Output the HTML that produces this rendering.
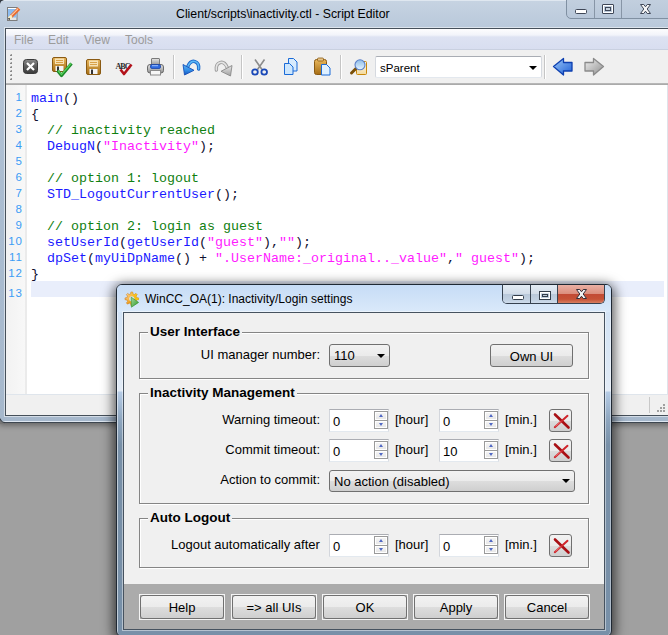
<!DOCTYPE html>
<html><head><meta charset="utf-8">
<style>
*{box-sizing:border-box;margin:0;padding:0}
html,body{width:668px;height:635px;overflow:hidden;background:#a0a0a0;font-family:"Liberation Sans",sans-serif;position:relative}
div,span,svg{position:absolute}
.t{white-space:pre}
/* editor window */
#ed{left:0;top:0;width:700px;height:423px;background:linear-gradient(#c6d3e2,#b8c8da 28px,#abbdd1 180px,#a6b8cc 100%);border-top:1px solid #dfe7f0;border-bottom:1px solid #3d4650;box-shadow:0 1px 6px 1px rgba(0,0,0,.4),inset 0 -1px 0 #dde6f0}
#edtitle{left:176px;top:7px;font-size:12.3px;color:#000}
#edcap{left:566px;top:-1px;width:110px;height:20px;border:1px solid #8090a2;border-radius:0 0 5px 5px;background:linear-gradient(#c2cfde,#b8c7d9)}
#dcap{left:502px;top:284px;width:103px;height:20px;border:1px solid #36414f;border-top:1px solid #1f2833;border-radius:0 0 5px 5px;overflow:hidden}
#dcap div{top:0;height:19px;background:linear-gradient(#e3ebf4 0,#d3dde9 45%,#b9c8da 50%,#c2d1e2 80%,#d4e1ef 100%)}
#dcap .cl{background:linear-gradient(#eab0a4 0,#dc8f7e 45%,#c24a34 50%,#c65236 75%,#dc8a6c 100%)}
#client{left:5px;top:28px;width:700px;height:388px;border:1px solid #46505a;background:#f0f0f0;box-shadow:0 0 0 1px rgba(255,255,255,.5)}
#menu{left:6px;top:29px;width:680px;height:21px;background:linear-gradient(#fdfdfe 0,#f2f4fa 6px,#dde2f2 8px,#d8def0 100%);border-bottom:1px solid #c9d0e0}
.mi{top:33px;font-size:12px;color:#9c9c9c}
#tb{left:6px;top:50px;width:680px;height:33px;background:#f0f0f0}
#tbline{left:6px;top:83px;width:680px;height:2px;background:linear-gradient(#bdbdbd,#a4a4a4)}
#edit{left:6px;top:85px;width:680px;height:309px;background:#fff}
#gutter{left:6px;top:85px;width:21px;height:309px;background:linear-gradient(90deg,#f2f2f2,#f8f8f8);border-right:2px solid #ebebeb}
#curline{left:31px;top:281px;width:633px;height:16px;background:#e9eefb}
.ln{left:5px;font-size:11.5px;letter-spacing:1px;color:#3b9cf5;width:18px;text-align:right}
.code{left:31px;font-family:"Liberation Mono",monospace;font-size:13.333px;color:#101030}
.code span{position:static}.k{color:#1a1aff}.c{color:#108010}.s{color:#ff1aff}
#status{left:6px;top:394px;width:680px;height:21px;background:#f0f0f0;border-top:1px solid #dfe5ec}
/* dialog */
#dshadow{left:116px;top:284px;width:496px;height:353px;border-radius:7px;box-shadow:0 3px 12px 3px rgba(0,0,0,.62)}
#dlg{left:116px;top:284px;width:496px;height:353px;border-radius:6px;border:1px solid #1f2833;background:linear-gradient(#cfe1f6 0,#d8e6f5 60px,#e2ebf6 106px,#b6cce6 107px,#8ea6bf 135px,#7890a8 160px,#7890a8 100%);box-shadow:inset 1px 1px 0 rgba(255,255,255,.55),inset -1px 0 0 rgba(255,255,255,.4)}
#dlgtop{left:117px;top:285px;width:494px;height:27px;border-radius:5px 5px 0 0;background:linear-gradient(#c6dcf6,#d2e4f8 60%,#dae9fa)}
#dtitle{left:145px;top:292px;font-size:12px;color:#000}
#dcl{left:123px;top:312px;width:482px;height:318px;border:1px solid #46525f;background:#f0f0f0;box-shadow:0 0 0 1px rgba(255,255,255,.45)}
#dbot{left:124px;top:584px;width:480px;height:45px;background:#ababab}
.lbl{font-size:13px;line-height:15px;color:#000}
.gb{border:1px solid #858585;box-shadow:inset 1px 1px 0 #fff, 1px 1px 0 #fff}
.gt{font-size:13.5px;line-height:15px;font-weight:bold;background:#f0f0f0;padding:0 2px;color:#000}
.spin{width:60px;height:23px;background:#fff;border:1px solid #dadde3;border-top-color:#abadb3;border-left-color:#d3d6dc;border-bottom-color:#e3e9ef}
.spin .v{left:3px;top:4px;font-size:13px;line-height:15px}
.sb{left:44px;top:1px;width:14px;height:18px;border:1px solid #9a9a9a;background:#9a9a9a}
.sb .up,.sb .dn{left:0;width:12px;height:8px;border:1px solid #fff;background:linear-gradient(#f4f4f4,#e8e8e8)}
.sb .up{top:0}.sb .dn{top:9px;height:7px}
i{position:absolute;width:0;height:0;border-left:3px solid transparent;border-right:3px solid transparent}
.ua{left:3px;top:1px;border-left-width:2.5px;border-right-width:2.5px;border-bottom:3px solid #5068c4}.da{left:3px;top:1px;border-left-width:2.5px;border-right-width:2.5px;border-top:3px solid #5068c4}
.xbtn{width:23px;height:23px;border:1px solid #707070;border-radius:3px;background:linear-gradient(#f2f2f2 0,#ebebeb 50%,#dddddd 51%,#cfcfcf 100%)}
.btn{height:24px;border:1px solid #707070;border-radius:3px;background:linear-gradient(#f2f2f2 0,#ebebeb 50%,#dddddd 51%,#cfcfcf 100%);box-shadow:inset 0 0 0 1px rgba(255,255,255,.8);font-size:13px;text-align:center;line-height:23px;color:#000}
.combo{border:1px solid #707070;border-radius:3px;background:linear-gradient(#f2f2f2 0,#ebebeb 50%,#dddddd 51%,#cfcfcf 100%);font-size:13px}
.arrow{width:0;height:0;border-left:4px solid transparent;border-right:4px solid transparent;border-top:4px solid #000}
</style></head><body>

<div id="ed"></div><svg style="left:0;top:0" width="8" height="8" viewBox="0 0 8 8"><path d="M0 0 H3 Q0 0.5 0 3 Z" fill="#a0a0a0"/><path d="M-0.5 3.5 Q-0.2 0.2 3.5 -0.5" fill="none" stroke="#2e343c" stroke-width="1.6"/></svg>
<div id="edtitle" class="t">Client/scripts\inactivity.ctl - Script Editor</div>
<div id="edcap"></div>
<svg style="left:566px;top:0" width="102" height="20" viewBox="0 0 102 20">
<rect x="28" y="0" width="1" height="18" fill="#8795a6"/><rect x="55" y="0" width="1" height="18" fill="#8795a6"/>
<rect x="9.5" y="9.5" width="11" height="4" rx="1" fill="#fff" stroke="#3f4757"/>
<rect x="36.5" y="4.5" width="11" height="9" rx="0.5" fill="none" stroke="#3f4757"/><rect x="37.5" y="5.5" width="9" height="7" fill="none" stroke="#fff"/><rect x="39.5" y="7.5" width="5" height="3" fill="#c8d3df" stroke="#3f4757"/>
<path d="M74.5 4.5 H77.8 L79.5 6.8 L81.2 4.5 H84.5 L81.2 9 L84.5 13.5 H81.2 L79.5 11.2 L77.8 13.5 H74.5 L77.8 9 Z" fill="#f6f6f6" stroke="#3f4757" stroke-width="1" stroke-linejoin="round"/>
</svg>
<div id="client"></div>
<div id="menu"></div>
<span class="mi t" style="left:14px">File</span><span class="mi t" style="left:48px">Edit</span><span class="mi t" style="left:84px">View</span><span class="mi t" style="left:125px">Tools</span>
<div id="tb"></div>
<div id="tbline"></div>
<div id="edit"></div>
<div id="gutter"></div>
<div id="curline"></div><div style="left:667px;top:85px;width:1px;height:309px;background:#dfe3ea"></div>
<div id="status"></div>
<svg style="left:0;top:414px" width="8" height="10" viewBox="0 414 8 10"><path d="M0 419 Q1.5 422.6 5 423 V424 H0 Z" fill="#767676"/><path d="M0 418.6 Q1.5 422.4 5 422.6" fill="none" stroke="#3a4048" stroke-width="1.2"/></svg>
<div style="left:649px;top:397px;width:1px;height:16px;background:#c8c8c8"></div>
<svg style="left:655px;top:403px" width="13" height="12" viewBox="0 0 13 12"><g fill="#a0a0a0"><rect x="8" y="1" width="2" height="2"/><rect x="5" y="4" width="2" height="2"/><rect x="8" y="4" width="2" height="2"/><rect x="2" y="7" width="2" height="2"/><rect x="5" y="7" width="2" height="2"/><rect x="8" y="7" width="2" height="2"/></g></svg>

<svg style="left:0;top:0" width="668" height="300" viewBox="0 0 668 300">
<defs>
<linearGradient id="gClose" x1="0" y1="0" x2="0" y2="1"><stop offset="0" stop-color="#8a8a8a"/><stop offset="0.5" stop-color="#5c5c5c"/><stop offset="1" stop-color="#3a3a3a"/></linearGradient>
<linearGradient id="gFlop" x1="0" y1="0" x2="0" y2="1"><stop offset="0" stop-color="#e9b75c"/><stop offset="1" stop-color="#a66d14"/></linearGradient>
<linearGradient id="gBlue" x1="0" y1="0" x2="1" y2="1"><stop offset="0" stop-color="#9cc8f7"/><stop offset="1" stop-color="#1e5fd6"/></linearGradient>
<linearGradient id="gGray" x1="0" y1="0" x2="1" y2="1"><stop offset="0" stop-color="#f0f0f0"/><stop offset="1" stop-color="#8e8e8e"/></linearGradient>
<linearGradient id="gPrint" x1="0" y1="0" x2="0" y2="1"><stop offset="0" stop-color="#e6e6e6"/><stop offset="1" stop-color="#8f8f8f"/></linearGradient>
<linearGradient id="gPaper" x1="0" y1="0" x2="0" y2="1"><stop offset="0" stop-color="#fffaf0"/><stop offset="1" stop-color="#f3d99c"/></linearGradient>
<linearGradient id="gLens" x1="0" y1="0" x2="0" y2="1"><stop offset="0" stop-color="#8fbde8"/><stop offset="1" stop-color="#e4f4ff"/></linearGradient>
<linearGradient id="gUndo" x1="0" y1="0" x2="0" y2="1"><stop offset="0" stop-color="#5ab4f4"/><stop offset="0.6" stop-color="#2f8ae6"/><stop offset="1" stop-color="#1450b8"/></linearGradient><linearGradient id="gRedo" x1="0" y1="0" x2="0" y2="1"><stop offset="0" stop-color="#e8e8e8"/><stop offset="1" stop-color="#a0a0a0"/></linearGradient></defs>
<!-- grip -->
<rect x="11" y="54" width="1" height="1" fill="#9a9a9a"/><rect x="10" y="55" width="2" height="1" fill="#8a8a8a"/><rect x="10" y="54" width="1" height="1" fill="#d0d0d0"/><rect x="11" y="58" width="1" height="1" fill="#9a9a9a"/><rect x="10" y="59" width="2" height="1" fill="#8a8a8a"/><rect x="10" y="58" width="1" height="1" fill="#d0d0d0"/><rect x="11" y="62" width="1" height="1" fill="#9a9a9a"/><rect x="10" y="63" width="2" height="1" fill="#8a8a8a"/><rect x="10" y="62" width="1" height="1" fill="#d0d0d0"/><rect x="11" y="66" width="1" height="1" fill="#9a9a9a"/><rect x="10" y="67" width="2" height="1" fill="#8a8a8a"/><rect x="10" y="66" width="1" height="1" fill="#d0d0d0"/><rect x="11" y="70" width="1" height="1" fill="#9a9a9a"/><rect x="10" y="71" width="2" height="1" fill="#8a8a8a"/><rect x="10" y="70" width="1" height="1" fill="#d0d0d0"/><rect x="11" y="74" width="1" height="1" fill="#9a9a9a"/><rect x="10" y="75" width="2" height="1" fill="#8a8a8a"/><rect x="10" y="74" width="1" height="1" fill="#d0d0d0"/><rect x="11" y="78" width="1" height="1" fill="#9a9a9a"/><rect x="10" y="79" width="2" height="1" fill="#8a8a8a"/><rect x="10" y="78" width="1" height="1" fill="#d0d0d0"/>
<!-- close doc -->
<rect x="23.5" y="59.5" width="14" height="14" rx="3" fill="url(#gClose)" stroke="#3a3a3a"/>
<path d="M27 63 L34 70 M34 63 L27 70" stroke="#fff" stroke-width="2.2"/>
<!-- save + check -->
<rect x="52.5" y="57.5" width="14" height="14" rx="1.5" fill="url(#gFlop)" stroke="#8a5a12"/>
<rect x="55" y="58.5" width="9" height="5.5" fill="#f7e2b5"/>
<path d="M56 60.5h7M56 62.5h7" stroke="#d59a3a" stroke-width="0.9"/>
<rect x="55.5" y="66" width="8" height="5" fill="#f4f4f4"/><rect x="57" y="66.5" width="2" height="4.5" fill="#333"/>
<path d="M57.5 70.5 L61.5 75.5 L71.5 63.5" fill="none" stroke="#1d8a2a" stroke-width="3.2" stroke-linejoin="round"/>
<path d="M58 70.5 L61.5 74.5 L71 63.5" fill="none" stroke="#58d05c" stroke-width="1.2"/>
<!-- save -->
<rect x="86.5" y="59.5" width="14" height="15" rx="1.5" fill="url(#gFlop)" stroke="#8a5a12"/>
<rect x="89" y="60.5" width="9" height="6" fill="#f7e2b5"/>
<path d="M90 62.5h7M90 64.5h7" stroke="#d59a3a" stroke-width="0.9"/>
<rect x="89.5" y="69" width="8" height="5" fill="#f4f4f4"/><rect x="91" y="69.5" width="2" height="4.5" fill="#333"/>
<!-- ABC -->
<text x="115.5" y="68.5" font-family="Liberation Serif" font-weight="bold" font-size="8" fill="#2a2a2a" textLength="15">ABC</text>
<path d="M120.5 69.5 L124 74 L131.5 64.5" fill="none" stroke="#b3121a" stroke-width="2.6" stroke-linejoin="round"/>
<!-- printer -->
<rect x="151.5" y="58.5" width="8" height="7" rx="0.5" fill="url(#gPrint)" stroke="#7a7a7a"/>
<rect x="147.5" y="64.5" width="16" height="8.5" rx="2.5" fill="url(#gPrint)" stroke="#6a6a6a"/>
<rect x="150.5" y="64.5" width="10" height="4" rx="1.5" fill="#2f6ae0" stroke="#1a45a8" stroke-width="0.8"/>
<rect x="152" y="65.2" width="6" height="1" fill="#9cc0ff"/>
<rect x="150.5" y="70.5" width="10" height="4.5" fill="#f6f6f6" stroke="#8a8a8a"/>
<!-- separators -->
<g fill="#c5c5c5"><rect x="173" y="55" width="1" height="24"/><rect x="241" y="55" width="1" height="24"/><rect x="340" y="55" width="1" height="24"/><rect x="544" y="55" width="1" height="24"/></g>
<g fill="#ffffff"><rect x="174" y="55" width="1" height="24"/><rect x="242" y="55" width="1" height="24"/><rect x="341" y="55" width="1" height="24"/><rect x="545" y="55" width="1" height="24"/></g>
<!-- undo -->
<path d="M198.6 69 C199.5 61 191.5 58 187.8 66.5" fill="none" stroke="#1b64c8" stroke-width="3.4" stroke-linecap="round"/>
<path d="M198.6 69 C199.5 61 191.5 58 187.8 66.5" fill="none" stroke="#5cb8f6" stroke-width="1.6" stroke-linecap="round"/>
<path d="M183 64.5 L184.5 75 L194 70.3 Z" fill="url(#gUndo)" stroke="#1650b8" stroke-width="0.9" stroke-linejoin="round"/>
<!-- redo -->
<path d="M216.4 70 C215.5 62 223.5 59 227.2 67.5" fill="none" stroke="#9c9c9c" stroke-width="3.4" stroke-linecap="round"/>
<path d="M216.4 70 C215.5 62 223.5 59 227.2 67.5" fill="none" stroke="#e4e4e4" stroke-width="1.6" stroke-linecap="round"/>
<path d="M232 65.5 L230.5 76 L221 71.3 Z" fill="url(#gRedo)" stroke="#8a8a8a" stroke-width="0.9" stroke-linejoin="round"/>
<!-- scissors -->
<path d="M255 59.5 L262 69.5 M264.5 59.5 L257.5 69.5" stroke="#8c8c8c" stroke-width="1.6"/>
<ellipse cx="255" cy="72" rx="2.8" ry="2.6" fill="none" stroke="#1a49b8" stroke-width="1.8"/>
<ellipse cx="264.2" cy="72" rx="2.8" ry="2.6" fill="none" stroke="#1a49b8" stroke-width="1.8"/>
<!-- copy -->
<path d="M288.5 58.5 h5 l3.5 3.5 v9 h-8.5 z" fill="#d7ebfd" stroke="#1a6bd8"/>
<path d="M284.5 63.5 h5 l3.5 3.5 v7.5 h-8.5 z" fill="#cde6fc" stroke="#1a6bd8"/>
<!-- paste -->
<rect x="314.5" y="59.5" width="12" height="15" rx="2" fill="url(#gFlop)" stroke="#8a5a12"/>
<rect x="317.5" y="58" width="6" height="3" rx="1" fill="#e6c489" stroke="#8a5a12" stroke-width="0.8"/>
<path d="M321.5 64.5 h5 l3.5 3.5 v7 h-8.5 z" fill="#dff0ff" stroke="#1a6bd8"/>
<!-- find -->
<rect x="356.5" y="61.5" width="10" height="13" rx="1" fill="url(#gPaper)" stroke="#c8880a"/>
<path d="M351.5 73 L356 68.5" stroke="#7a5008" stroke-width="3" stroke-linecap="round"/>
<circle cx="360" cy="64.8" r="5" fill="url(#gLens)" stroke="#5b7fc8" stroke-width="1.1"/>
<!-- combo sParent -->
<!-- back -->
<path d="M553.5 66.5 L563.5 58.5 V62.5 H572 V71 H563.5 V75 Z" fill="url(#gBlue)" stroke="#0d3fb0" stroke-width="1.3" stroke-linejoin="round"/>
<!-- forward -->
<path d="M603.5 66.5 L593.5 58.5 V62.5 H585 V71 H593.5 V75 Z" fill="url(#gGray)" stroke="#8a8a8a" stroke-width="1.3" stroke-linejoin="round"/>
<!-- window icon -->
<rect x="7.5" y="7.5" width="9.5" height="13" fill="#e6e6e6" stroke="#7c7c7c"/>
<rect x="8" y="8" width="8.5" height="1" fill="#fff"/>
<rect x="8" y="9" width="8.5" height="8.5" fill="#8cbcf0"/>
<path d="M11 16.5 L19 8.5" stroke="#e8682a" stroke-width="3.6" stroke-linecap="butt"/>
<path d="M10.8 16 L18.2 8.6" stroke="#ffc8a0" stroke-width="1.1"/>
<path d="M9 18.5 L11.5 16" stroke="#fff0c0" stroke-width="3"/>
<path d="M8.6 19.4 L9.6 18.4" stroke="#222" stroke-width="1.6"/>
</svg>

<div style="left:375px;top:56px;width:167px;height:22px;background:#fff;border:1px solid #d5d9df;border-top-color:#a9adb4;border-bottom-color:#e3e8ee;border-radius:2px"></div>
<span class="t" style="left:380px;top:61px;font-size:11.5px;line-height:15px;color:#000">sParent</span>
<i style="left:529px;top:66px;border-left:4px solid transparent;border-right:4px solid transparent;border-top:4px solid #000"></i>
<!-- code -->
<span class="ln t" style="top:91px">1</span><span class="code t" style="top:91px"><span class="k">main</span>()</span>
<span class="ln t" style="top:107px">2</span><span class="code t" style="top:107px">{</span>
<span class="ln t" style="top:123px">3</span><span class="code t" style="top:123px">  <span class="c">// inactivity reached</span></span>
<span class="ln t" style="top:139px">4</span><span class="code t" style="top:139px">  <span class="k">DebugN</span>(<span class="s">"Inactivity"</span>);</span>
<span class="ln t" style="top:155px">5</span><span class="code t" style="top:155px"></span>
<span class="ln t" style="top:171px">6</span><span class="code t" style="top:171px">  <span class="c">// option 1: logout</span></span>
<span class="ln t" style="top:187px">7</span><span class="code t" style="top:187px">  <span class="k">STD_LogoutCurrentUser</span>();</span>
<span class="ln t" style="top:203px">8</span><span class="code t" style="top:203px"></span>
<span class="ln t" style="top:219px">9</span><span class="code t" style="top:219px">  <span class="c">// option 2: login as guest</span></span>
<span class="ln t" style="top:235px">10</span><span class="code t" style="top:235px">  <span class="k">setUserId</span>(<span class="k">getUserId</span>(<span class="s">"guest"</span>),<span class="s">""</span>);</span>
<span class="ln t" style="top:251px">11</span><span class="code t" style="top:251px">  <span class="k">dpSet</span>(<span class="k">myUiDpName</span>() + <span class="s">".UserName:_original.._value"</span>,<span class="s">" guest"</span>);</span>
<span class="ln t" style="top:267px">12</span><span class="code t" style="top:267px">}</span>
<span class="ln t" style="top:287px">13</span><span class="code t" style="top:283px"></span>

<div id="dshadow"></div>
<div id="dlg"></div>
<div id="dlgtop"></div>
<svg style="left:118px;top:286px" width="26" height="24" viewBox="118 286 26 24">
<defs><linearGradient id="gGear" x1="0" y1="0" x2="1" y2="1"><stop offset="0" stop-color="#ffe6c0"/><stop offset="0.45" stop-color="#f8b040"/><stop offset="0.5" stop-color="#f0a020"/><stop offset="1" stop-color="#e06000"/></linearGradient>
<linearGradient id="gGear2" x1="0" y1="0" x2="1" y2="0"><stop offset="0" stop-color="#f0a040" stop-opacity="0"/><stop offset="1" stop-color="#ffe600"/></linearGradient>
<linearGradient id="gPlay" x1="0" y1="0" x2="1" y2="1"><stop offset="0" stop-color="#a8d8a0"/><stop offset="1" stop-color="#2a9a2a"/></linearGradient></defs>
<path d="M136.68 297.71 L138.54 297.92 L138.54 299.68 L136.68 299.89 L136.02 301.48 L137.19 302.94 L135.94 304.19 L134.48 303.02 L132.89 303.68 L132.68 305.54 L130.92 305.54 L130.71 303.68 L129.12 303.02 L127.66 304.19 L126.41 302.94 L127.58 301.48 L126.92 299.89 L125.06 299.68 L125.06 297.92 L126.92 297.71 L127.58 296.12 L126.41 294.66 L127.66 293.41 L129.12 294.58 L130.71 293.92 L130.92 292.06 L132.68 292.06 L132.89 293.92 L134.48 294.58 L135.94 293.41 L137.19 294.66 L136.02 296.12 Z" fill="url(#gGear)" stroke="#c87818" stroke-width="0.6"/>
<path d="M136.68 297.71 L138.54 297.92 L138.54 299.68 L136.68 299.89 L136.02 301.48 L137.19 302.94 L135.94 304.19 L134.48 303.02 L132.89 303.68 L132.68 305.54 L130.92 305.54 L130.71 303.68 L129.12 303.02 L127.66 304.19 L126.41 302.94 L127.58 301.48 L126.92 299.89 L125.06 299.68 L125.06 297.92 L126.92 297.71 L127.58 296.12 L126.41 294.66 L127.66 293.41 L129.12 294.58 L130.71 293.92 L130.92 292.06 L132.68 292.06 L132.89 293.92 L134.48 294.58 L135.94 293.41 L137.19 294.66 L136.02 296.12 Z" fill="url(#gGear2)" opacity="0.8"/>
<circle cx="131.8" cy="298.8" r="2.6" fill="#d6e6f8"/>
<path d="M131.2 297.2 L138.6 302.4 L131.4 307.2 Z" fill="url(#gPlay)" stroke="#3a9a3a" stroke-width="0.7" stroke-linejoin="round"/>
</svg>
<div id="dtitle" class="t">WinCC_OA(1): Inactivity/Login settings</div>
<div id="dcap"><div style="left:0;width:28px;border-right:1px solid #36414f"></div><div style="left:28px;width:27px;border-right:1px solid #36414f"></div><div class="cl" style="left:55px;width:47px"></div>
<svg style="left:0;top:0" width="103" height="20" viewBox="0 0 103 20">
<rect x="9.5" y="10.5" width="11" height="4" rx="1" fill="#fff" stroke="#333d4a"/>
<rect x="36.5" y="6.5" width="11" height="8" fill="none" stroke="#333d4a" stroke-width="1"/><rect x="37.5" y="7.5" width="9" height="6" fill="none" stroke="#fff" stroke-width="1"/><rect x="39.5" y="9.5" width="5" height="2" fill="none" stroke="#333d4a" stroke-width="1"/>
<path d="M73.5 4.5 H76.8 L78.5 6.8 L80.2 4.5 H83.5 L80.2 9 L83.5 13.5 H80.2 L78.5 11.2 L76.8 13.5 H73.5 L76.8 9 Z" fill="#f2f2f2" stroke="#34303a" stroke-width="1" stroke-linejoin="round"/>
</svg></div>
<div id="dcl"></div>
<div id="dbot"></div>
<!-- dialog content -->
<div class="gb" style="left:139px;top:332px;width:450px;height:47px"></div>
<span class="gt t" style="left:148px;top:324px">User Interface</span>
<span class="lbl t" style="left:200px;width:120px;text-align:right;top:347px">UI manager number:</span>
<div class="combo" style="left:329px;top:344px;width:61px;height:23px"><span class="t" style="left:4px;top:3px">110</span><div class="arrow" style="left:47px;top:9px"></div></div>
<div class="btn" style="left:490px;top:344px;width:83px;height:23px;box-shadow:none">Own UI</div>

<div class="gb" style="left:139px;top:393px;width:450px;height:111px"></div>
<span class="gt t" style="left:148px;top:385px">Inactivity Management</span>
<span class="lbl t" style="left:200px;width:120px;text-align:right;top:412px">Warning timeout:</span>
<span class="lbl t" style="left:200px;width:120px;text-align:right;top:442px">Commit timeout:</span>
<span class="lbl t" style="left:200px;width:120px;text-align:right;top:472px">Action to commit:</span>
<div class="spin" style="left:329px;top:409px"><span class="v t">0</span><div class="sb"><div class="up"><i class="ua"></i></div><div class="dn"><i class="da"></i></div></div></div>
<span class="lbl t" style="left:395px;top:412px">[hour]</span>
<div class="spin" style="left:439px;top:409px"><span class="v t">0</span><div class="sb"><div class="up"><i class="ua"></i></div><div class="dn"><i class="da"></i></div></div></div>
<span class="lbl t" style="left:505px;top:412px">[min.]</span>
<div class="xbtn" style="left:549px;top:409px"><svg style="left:0;top:0" width="21" height="21" viewBox="0 0 21 21"><path d="M5 4.5 L18.5 17.5" stroke="#a80f14" stroke-width="2.6" stroke-linecap="round"/><path d="M4.8 17.2 L17.5 5.8" stroke="#d0242a" stroke-width="2" stroke-linecap="round"/><path d="M5.5 16.3 L11 11.5" stroke="#f08a8a" stroke-width="0.7"/></svg></div>
<div class="spin" style="left:329px;top:439px"><span class="v t">0</span><div class="sb"><div class="up"><i class="ua"></i></div><div class="dn"><i class="da"></i></div></div></div>
<span class="lbl t" style="left:395px;top:442px">[hour]</span>
<div class="spin" style="left:439px;top:439px"><span class="v t">10</span><div class="sb"><div class="up"><i class="ua"></i></div><div class="dn"><i class="da"></i></div></div></div>
<span class="lbl t" style="left:505px;top:442px">[min.]</span>
<div class="xbtn" style="left:549px;top:439px"><svg style="left:0;top:0" width="21" height="21" viewBox="0 0 21 21"><path d="M5 4.5 L18.5 17.5" stroke="#a80f14" stroke-width="2.6" stroke-linecap="round"/><path d="M4.8 17.2 L17.5 5.8" stroke="#d0242a" stroke-width="2" stroke-linecap="round"/><path d="M5.5 16.3 L11 11.5" stroke="#f08a8a" stroke-width="0.7"/></svg></div>
<div class="combo" style="left:329px;top:470px;width:246px;height:22px"><span class="t" style="left:4px;top:3px">No action (disabled)</span><div class="arrow" style="left:232px;top:8px"></div></div>

<div class="gb" style="left:139px;top:518px;width:450px;height:50px"></div>
<span class="gt t" style="left:148px;top:510px">Auto Logout</span>
<span class="lbl t" style="left:171px;top:537px">Logout automatically after</span>
<div class="spin" style="left:329px;top:534px"><span class="v t">0</span><div class="sb"><div class="up"><i class="ua"></i></div><div class="dn"><i class="da"></i></div></div></div>
<span class="lbl t" style="left:395px;top:537px">[hour]</span>
<div class="spin" style="left:439px;top:534px"><span class="v t">0</span><div class="sb"><div class="up"><i class="ua"></i></div><div class="dn"><i class="da"></i></div></div></div>
<span class="lbl t" style="left:505px;top:537px">[min.]</span>
<div class="xbtn" style="left:549px;top:534px"><svg style="left:0;top:0" width="21" height="21" viewBox="0 0 21 21"><path d="M5 4.5 L18.5 17.5" stroke="#a80f14" stroke-width="2.6" stroke-linecap="round"/><path d="M4.8 17.2 L17.5 5.8" stroke="#d0242a" stroke-width="2" stroke-linecap="round"/><path d="M5.5 16.3 L11 11.5" stroke="#f08a8a" stroke-width="0.7"/></svg></div>



<div style="left:139px;top:594px;width:86px;height:26px;border:1px solid #f4f4f4"></div><div class="btn" style="left:140px;top:595px;width:84px;box-shadow:none">Help</div>
<div style="left:231px;top:594px;width:86px;height:26px;border:1px solid #f4f4f4"></div><div class="btn" style="left:232px;top:595px;width:84px;box-shadow:none">=&gt; all UIs</div>
<div style="left:322px;top:594px;width:86px;height:26px;border:1px solid #f4f4f4"></div><div class="btn" style="left:323px;top:595px;width:84px;box-shadow:none">OK</div>
<div style="left:413px;top:594px;width:86px;height:26px;border:1px solid #f4f4f4"></div><div class="btn" style="left:414px;top:595px;width:84px;box-shadow:none">Apply</div>
<div style="left:504px;top:594px;width:86px;height:26px;border:1px solid #f4f4f4"></div><div class="btn" style="left:505px;top:595px;width:84px;box-shadow:none">Cancel</div>
</body></html>
